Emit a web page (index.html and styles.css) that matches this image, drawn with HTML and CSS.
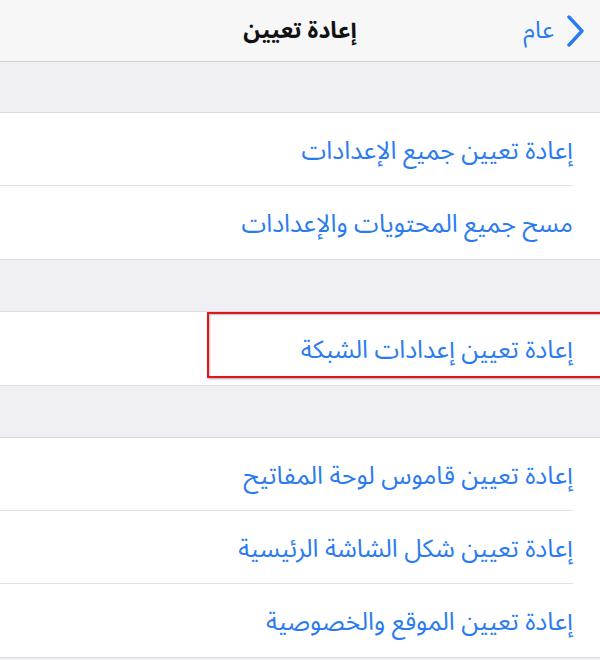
FILE: index.html
```html
<!DOCTYPE html>
<html lang="ar" dir="rtl">
<head>
    <meta charset="UTF-8">
    <meta name="viewport" content="width=device-width, initial-scale=1.0">
    <title>إعادة تعيين</title>
    <link rel="stylesheet" href="styles.css">
</head>
<body>
    <div class="navbar">
        <div class="nav-back">
            <svg class="chevron" width="20" height="32" viewBox="0 0 20 32">
                <path d="M3 2 L16 16 L3 30" fill="none" stroke="#2a7bef" stroke-width="3.4" stroke-linecap="round" stroke-linejoin="round"/>
            </svg>
            <span class="back-label">عام</span>
        </div>
        <div class="nav-title">إعادة تعيين</div>
    </div>

    <div class="spacer"></div>
    <div class="group">
        <div class="row">إعادة تعيين جميع الإعدادات</div>
        <div class="row">مسح جميع المحتويات والإعدادات</div>
    </div>

    <div class="spacer wide"></div>
    <div class="group">
        <div class="row highlighted">
            إعادة تعيين إعدادات الشبكة
            <span class="highlight-box"></span>
        </div>
    </div>

    <div class="spacer wide"></div>
    <div class="group">
        <div class="row">إعادة تعيين قاموس لوحة المفاتيح</div>
        <div class="row">إعادة تعيين شكل الشاشة الرئيسية</div>
        <div class="row">إعادة تعيين الموقع والخصوصية</div>
    </div>
</body>
</html>
```

FILE: styles.css
```css
* {
    margin: 0;
    padding: 0;
    box-sizing: border-box;
}

body {
    font-family: "Noto Sans Arabic", "DejaVu Sans", sans-serif;
    background: #efeff4;
    width: 600px;
    height: 660px;
    overflow: hidden;
}

.navbar {
    height: 62px;
    background: #f7f7f8;
    border-bottom: 1px solid #cfcfd3;
    display: flex;
    align-items: center;
    justify-content: center;
    position: relative;
}

.nav-title {
    font-size: 23px;
    font-weight: 700;
    color: #111;
}

.nav-back {
    position: absolute;
    right: 14px;
    top: 0;
    height: 61px;
    display: flex;
    align-items: center;
    gap: 12px;
}

.back-label {
    font-size: 24px;
    color: #2a7bef;
}

.spacer {
    height: 50px;
}

.spacer.wide {
    height: 51px;
}

.group {
    background: #fff;
    border-top: 1px solid #dcdce0;
    border-bottom: 1px solid #dcdce0;
}

.row {
    height: 73px;
    margin-right: 27px;
    padding-top: 3px;
    display: flex;
    align-items: center;
    font-size: 25px;
    color: #2a7bef;
    border-bottom: 1px solid #e2e2e4;
    position: relative;
}

.row:last-child {
    border-bottom: none;
}

.highlight-box {
    position: absolute;
    top: 0;
    bottom: 7px;
    right: -30px;
    left: 207px;
    border: 2px solid #e0141b;
    box-shadow: 1px 1px 2px rgba(0, 0, 0, 0.35), inset 1px 1px 2px rgba(0, 0, 0, 0.25);
}
```
